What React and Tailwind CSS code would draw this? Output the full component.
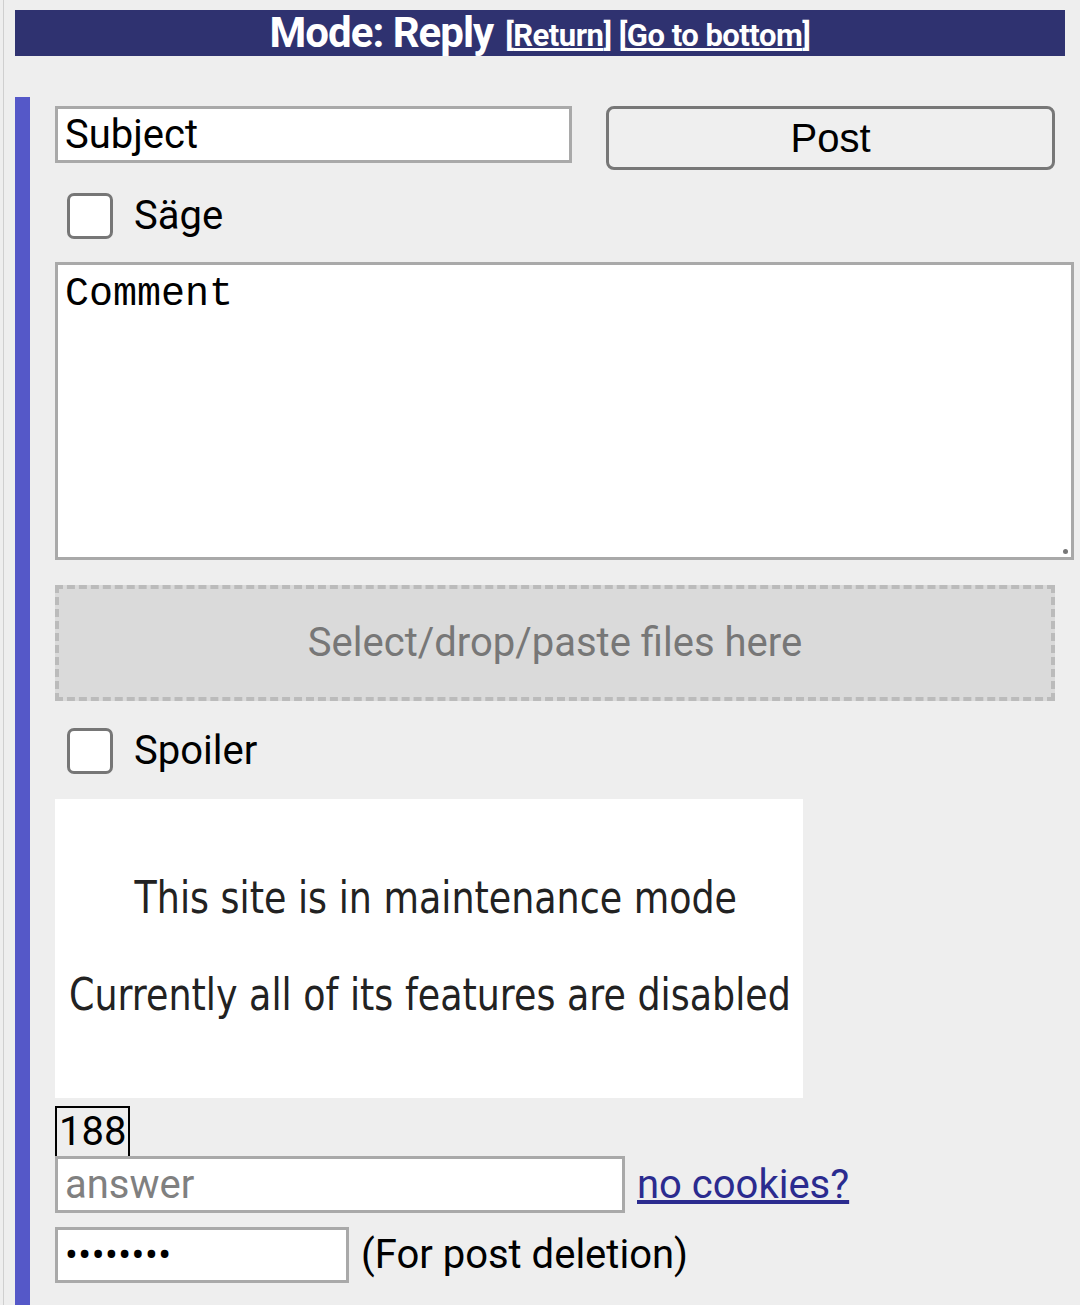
import React from 'react';

const sans = { fontFamily: 'Roboto, "Noto Sans", sans-serif' };

const Check = ({ label }) => (
  <label className="flex items-center h-[46px]">
    <span className="ml-[12px] w-[46px] h-[46px] rounded-[7px] border-[3px] border-[#767676] bg-white box-border" />
    <span className="ml-[21px] text-[40px] text-black leading-none">{label}</span>
  </label>
);

export default function App() {
  return (
    <div
      className="w-[1080px] h-[1305px] overflow-hidden bg-[#eeeeee] flex flex-col pl-[3px]"
      style={sans}
    >
      <div className="flex-1 flex flex-col border-l border-[#cfcfcf] pl-[11px]">
        <div className="mt-[10px] mr-[15px] h-[46px] bg-[#2f3270] flex items-center justify-center text-white font-bold leading-none">
          <span className="text-[42px] tracking-[-1px]">Mode: Reply</span>
          <span className="ml-[12px] text-[31px] tracking-[-0.5px] mt-[4px]">
            [<a className="underline">Return</a>] [<a className="underline">Go to bottom</a>]
          </span>
        </div>

        <div className="mt-[41px] flex-1 border-l-[15px] border-[#5558c8] pl-[25px] pt-[9px] flex flex-col items-start">
          <div className="flex items-start">
            <div className="w-[517px] h-[57px] bg-white border-[3px] border-[#a9a9a9] flex items-center pl-[7px] text-[40px] text-black leading-none">
              Subject
            </div>
            <button
              className="ml-[34px] w-[449px] h-[64px] rounded-[8px] border-[3px] border-[#777777] bg-[#efefef] text-[40px] text-black leading-none"
              style={{ fontFamily: '"Liberation Sans", Arial, sans-serif' }}
            >
              Post
            </button>
          </div>

          <div className="mt-[23px]">
            <Check label="Säge" />
          </div>

          <div
            className="relative mt-[23px] w-[1019px] h-[298px] bg-white border-[3px] border-[#a9a9a9] pl-[7px] pt-[10px] text-[40px] text-black leading-none"
            style={{ fontFamily: '"Liberation Mono", "DejaVu Sans Mono", monospace' }}
          >
            Comment
            <span className="absolute right-[3px] bottom-[3px] w-[5px] h-[5px] rounded-full bg-[#777777]" />
          </div>

          <div className="mt-[25px] w-[1000px] h-[116px] bg-[#dadada] border-[4px] border-dashed border-[#bbbbbb] flex items-center justify-center text-[40px] text-[#777777] leading-none">
            Select/drop/paste files here
          </div>

          <div className="mt-[27px]">
            <Check label="Spoiler" />
          </div>

          <div
            className="mt-[25px] w-[748px] h-[299px] bg-white flex flex-col items-center justify-center gap-[53px] pb-[4px] text-[#222222] text-[44px] leading-none whitespace-nowrap overflow-hidden"
            style={{ fontFamily: '"DejaVu Sans", sans-serif' }}
          >
            <span className="block ml-[14px] [transform:scaleX(0.828)]">This site is in maintenance mode</span>
            <span className="block ml-[2px] [transform:scaleX(0.828)]">Currently all of its features are disabled</span>
          </div>

          <div className="mt-[8px] h-[50px] px-[2px] border-x-[2px] border-t-[2px] border-black flex items-center text-[40px] text-black leading-none">
            188
          </div>

          <div className="flex items-center">
            <div className="w-[570px] h-[57px] bg-white border-[3px] border-[#a9a9a9] flex items-center pl-[7px] text-[40px] text-[#808080] leading-none">
              answer
            </div>
            <a className="ml-[12px] text-[40px] text-[#2b2b8f] underline leading-none">no cookies?</a>
          </div>

          <div className="mt-[14px] flex items-center">
            <div className="w-[294px] h-[56px] bg-white border-[3px] border-[#a9a9a9] flex items-center pl-[7px] text-[38px] tracking-[0.5px] text-black leading-none">
              ••••••••
            </div>
            <span className="ml-[12px] text-[40px] text-black leading-none">(For post deletion)</span>
          </div>
        </div>
      </div>
    </div>
  );
}
